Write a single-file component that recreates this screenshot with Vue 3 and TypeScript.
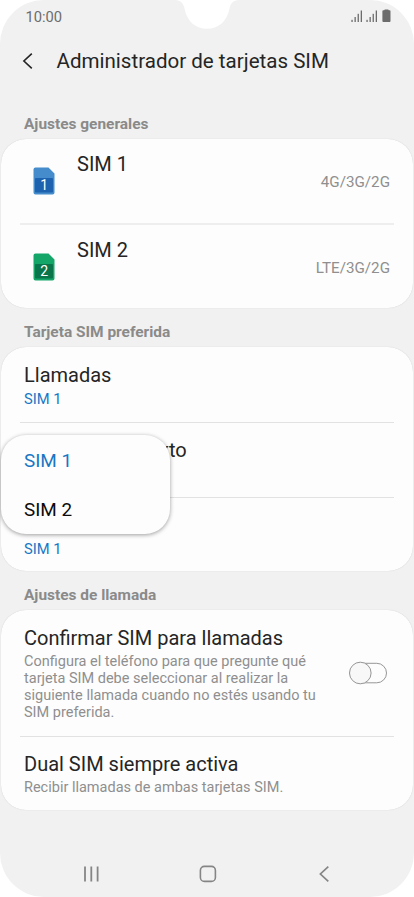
<script setup lang="ts">
interface Sim {
  slot: number
  name: string
  network: string
  body: string
  panel: string
}
interface Preference {
  title: string
  value: string
  hideTitle?: boolean
  hideValue?: boolean
}

const sims: Sim[] = [
  { slot: 1, name: 'SIM 1', network: '4G/3G/2G', body: '#448ccb', panel: '#1c62ae' },
  { slot: 2, name: 'SIM 2', network: 'LTE/3G/2G', body: '#14a569', panel: '#08754a' },
]
// Lines lying completely under the open menu are hidden.
const preferences: Preference[] = [
  { title: 'Llamadas', value: 'SIM 1' },
  { title: 'Mensajes de texto', value: 'SIM 1', hideValue: true },
  { title: 'Datos móviles', value: 'SIM 1', hideTitle: true },
]
const bars = [2.2, 5, 8.2, 11.5]
</script>

<template>
  <div class="phone">
    <svg class="notch" width="74" height="30" viewBox="0 0 74 30">
      <path d="M5 0C11 0 13.500 4 14.500 8.500C17 22 26 28.700 37 28.700S57 22 59.500 8.500C60.500 4 63 0 69 0Z" fill="#fff" />
    </svg>

    <header class="status">
      <span class="clock">10:00</span>
      <svg class="indicators" width="41" height="14" viewBox="0 0 41 14">
        <g fill="#6c6c6c">
          <g v-for="s in 2" :key="s">
            <rect
              v-for="(h, i) in bars"
              :key="i"
              :x="(s - 1) * 15 + 0.4 + i * 3.1"
              :y="13 - h"
              width="1.300"
              :height="h"
            />
          </g>
          <path d="M33.300 1.200V.900Q33.300.400 34 .400h3q.700 0 .700.500v.300h.900q.900 0 .900.900v9.900q0 1-.900 1h-6.300q-.900 0-.900-1V2.100q0-.900.900-.900Z" />
        </g>
      </svg>
    </header>

    <div class="titlebar">
      <svg class="back" width="12" height="18" viewBox="0 0 12 18">
        <path d="M9.800 1.700 1.900 9l7.900 7.300" fill="none" stroke="#252525" stroke-width="1.600" />
      </svg>
      <h1>Administrador de tarjetas SIM</h1>
    </div>

    <main>
      <h2 class="first">Ajustes generales</h2>
      <section class="card">
        <div v-for="sim in sims" :key="sim.slot" class="sim-row">
          <svg class="sim-icon" width="22" height="28" viewBox="0 0 22 28">
            <path d="M2 .500h13.500l6 6V25.500q0 2-2 2H2.500q-2 0-2-2V2.500q0-2 2-2Z" :fill="sim.body" />
            <rect x="2" y="11" width="18" height="14.500" rx="1" :fill="sim.panel" />
            <text x="11.300" y="23" text-anchor="middle" fill="#fff">{{ sim.slot }}</text>
          </svg>
          <span class="sim-name item-title">{{ sim.name }}</span>
          <span class="network">{{ sim.network }}</span>
        </div>
      </section>

      <h2>Tarjeta SIM preferida</h2>
      <section class="card">
        <div v-for="item in preferences" :key="item.title" class="pref-row">
          <div class="item-title" :class="{ covered: item.hideTitle }">{{ item.title }}</div>
          <div class="value" :class="{ covered: item.hideValue }">{{ item.value }}</div>
        </div>
        <div class="menu">
          <div class="option selected">SIM 1</div>
          <div class="option">SIM 2</div>
        </div>
      </section>

      <h2>Ajustes de llamada</h2>
      <section class="card">
        <div class="confirm-row">
          <div class="copy">
            <div class="item-title">Confirmar SIM para llamadas</div>
            <p>
              Configura el teléfono para que pregunte qué<br />tarjeta SIM debe seleccionar al realizar la<br />siguiente
              llamada cuando no estés usando tu<br />SIM preferida.
            </p>
          </div>
          <svg class="switch" width="40" height="24" viewBox="0 0 40 24">
            <rect x="2" y="2.300" width="36.500" height="19.500" rx="9.750" fill="#fdfdfd" stroke="#969696" />
            <circle cx="12.300" cy="12" r="10.800" fill="#f8f8f8" stroke="#969696" />
          </svg>
        </div>
        <div class="dual-row">
          <div class="item-title">Dual SIM siempre activa</div>
          <p>Recibir llamadas de ambas tarjetas SIM.</p>
        </div>
      </section>
    </main>

    <nav>
      <svg width="18" height="18" viewBox="0 0 18 18">
        <path d="M2 1.500v15M8.300 1.500v15M14.600 1.500v15" fill="none" stroke="#858585" stroke-width="1.800" />
      </svg>
      <svg width="18" height="18" viewBox="0 0 18 18">
        <rect x="1.400" y="1.400" width="15" height="15" rx="4" fill="none" stroke="#858585" stroke-width="1.600" />
      </svg>
      <svg width="18" height="18" viewBox="0 0 18 18">
        <path d="M13.300 1.700 5.400 9l7.900 7.300" fill="none" stroke="#858585" stroke-width="1.700" />
      </svg>
    </nav>
  </div>
</template>

<style>
body {
  background: #fff;
}
</style>

<style scoped>
.phone {
  position: relative;
  display: flex;
  flex-direction: column;
  box-sizing: border-box;
  width: 414px;
  height: 897px;
  overflow: hidden;
  border-radius: 44px;
  background: #f1f1f1;
  color: #252525;
  font-family: Roboto, 'Liberation Sans', sans-serif;
  white-space: nowrap;
}
.notch {
  position: absolute;
  top: 0;
  left: 170px;
}
.status {
  display: flex;
  align-items: center;
  justify-content: space-between;
  height: 33px;
  padding: 0 22px 0 25.5px;
}
.clock {
  padding-top: 1px;
  font-size: 14.7px;
  color: #6c6c6c;
}
.indicators {
  display: block;
  margin-top: -1px;
}
.titlebar {
  display: flex;
  align-items: center;
  height: 55px;
  padding-left: 21.5px;
}
h1 {
  margin: 1px 0 0 23px;
  font-size: 20.55px;
  font-weight: 400;
  line-height: 30px;
}
h2 {
  margin: 0;
  padding: 9px 24px 0;
  font-size: 15.45px;
  font-weight: 700;
  line-height: 30px;
  color: #8a8a8a;
}
h2.first {
  padding-top: 21px;
}
.card {
  position: relative;
  margin: 0 1px;
  border-radius: 25px;
  background: #fdfdfd;
  box-shadow: 0 0 1px rgba(0, 0, 0, 0.2);
}
.sim-row,
.pref-row,
.confirm-row,
.dual-row {
  position: relative;
  box-sizing: border-box;
}
.sim-row + .sim-row::before,
.pref-row + .pref-row::before,
.dual-row::before {
  content: '';
  position: absolute;
  top: 0;
  left: 19px;
  right: 19px;
  height: 1px;
  background: #e2e2e2;
}
.card > .sim-row + .sim-row::before {
  top: -1px;
  height: 2px;
  background: #eeeeee;
}
.item-title {
  font-size: 20px;
  line-height: 26px;
}
.covered {
  visibility: hidden;
}
.sim-row {
  display: flex;
  align-items: flex-start;
  height: 85px;
  padding: 0 23px 0 32px;
}
.sim-row:last-child {
  height: 84px;
  padding-top: 0.5px;
}
.sim-icon {
  margin-top: 28px;
}
.sim-icon text {
  font-size: 14px;
}
.sim-name {
  margin: 12px 0 0 22px;
}
.sim-row:last-child .sim-name,
.sim-row:last-child .network {
  padding-top: 0.5px;
}
.network {
  margin: 33px 0 0 auto;
  font-size: 15.2px;
  line-height: 20px;
  color: #8f8f8f;
}
.pref-row {
  height: 75px;
  padding: 15px 23px 0;
}
.pref-row:nth-child(3) {
  height: 74px;
}
.value {
  padding-top: 1px;
  font-size: 14.7px;
  line-height: 20px;
  color: #1877c4;
}
.menu {
  position: absolute;
  top: 88px;
  left: 0;
  box-sizing: border-box;
  width: 169px;
  height: 99px;
  border-radius: 25px;
  background: #fdfdfd;
  box-shadow: 0 1px 4px rgba(0, 0, 0, 0.38);
}
.option {
  height: 49px;
  padding-left: 23px;
  font-size: 18.9px;
  line-height: 52px;
  color: #0c0c0c;
}
.option.selected {
  color: #1877c4;
}
.confirm-row {
  display: flex;
  align-items: center;
  justify-content: space-between;
  height: 126px;
  padding: 15px 25px 15px 23px;
}
.switch {
  margin-top: -1px;
}
p {
  margin: 2px 0 0;
  font-size: 14.5px;
  line-height: 17px;
  color: #8f8f8f;
}
.dual-row {
  height: 74px;
  padding: 15px 23px 0;
}
nav {
  display: flex;
  align-items: center;
  justify-content: space-between;
  height: 18px;
  margin: 55px 81px 0 83px;
}
</style>
